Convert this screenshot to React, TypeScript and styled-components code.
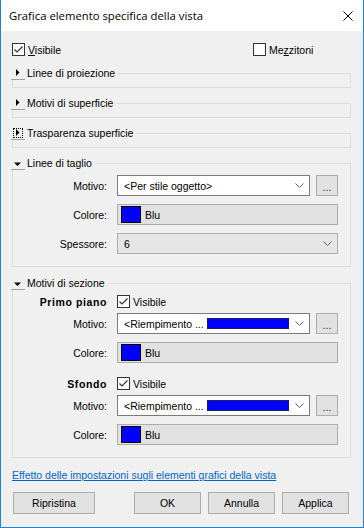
import React from "react";
import styled, { createGlobalStyle } from "styled-components";

const Global = createGlobalStyle`
  html, body { margin: 0; padding: 0; background: #ffffff; }
  body { font-family: "Liberation Sans", Arial, sans-serif; font-size: 10.5px; color: #000; }
  *, *::before, *::after { box-sizing: border-box; }
`;

const Window = styled.div`
  width: 364px;
  height: 528px;
  border: 1px solid #1883d7;
  border-top: none;
  background: #f0f0f0;
  display: flex;
  flex-direction: column;
`;

const TitleBar = styled.div`
  height: 31px;
  flex: none;
  background: #ffffff;
  display: flex;
  align-items: center;
  justify-content: space-between;
  padding: 0 10px 0 8px;
  font-family: "Open Sans", "Noto Sans", sans-serif;
  font-size: 11.3px;
  color: #000;
`;

const CloseIcon = () => (
  <svg width="10" height="10" viewBox="0 0 10 10" style={{ display: "block" }}>
    <path d="M0.5 0.5 L9.5 9.5 M9.5 0.5 L0.5 9.5" stroke="#000" strokeWidth="1" fill="none" />
  </svg>
);

const Body = styled.div`
  flex: 1;
  display: flex;
  flex-direction: column;
  padding: 11px 12px 0 11px;
`;

const TopRow = styled.div`
  display: grid;
  grid-template-columns: 241px 1fr;
  height: 15px;
  align-items: center;
`;

const CheckLabel = styled.label`
  display: inline-flex;
  align-items: center;
  gap: 3px;
  height: 15px;
  white-space: nowrap;
`;

const Box = styled.span`
  width: 13px;
  height: 13px;
  border: 1px solid #333333;
  background: #ffffff;
  display: inline-block;
  flex: none;
`;

const U = styled.span`
  text-decoration: underline;
`;

const CheckBox = ({ checked }: { checked?: boolean }) => (
  <Box>
    {checked && (
      <svg width="11" height="11" viewBox="0 0 11 11" style={{ display: "block" }}>
        <path d="M1.5 5.5 L4 8 L9.5 2.5" stroke="#333" strokeWidth="1.2" fill="none" />
      </svg>
    )}
  </Box>
);

const Group = styled.fieldset<{ $mt: number; $pb: number }>`
  margin: ${(p) => p.$mt}px 0 0 0;
  padding: 0 0 ${(p) => p.$pb}px 0;
  border: 1px solid #dcdcdc;
  min-width: 0;
`;

const Legend = styled.legend`
  display: flex;
  align-items: center;
  height: 14px;
  padding: 0 3px 0 0;
  margin-left: -2px;
  gap: 2px;
  white-space: nowrap;
`;

const Expander = styled.span<{ $focused?: boolean }>`
  width: 14px;
  height: 14px;
  flex: none;
  background: #f0f0f0;
  border-bottom: 1px solid #a0a0a0;
  display: block;
  outline: ${(p) => (p.$focused ? "1px dotted #000" : "none")};
  outline-offset: -3px;
`;

const Arrow = ({ open }: { open?: boolean }) => (
  <svg width="14" height="14" viewBox="0 0 14 14" style={{ display: "block" }}>
    {open ? (
      <polygon points="3,6.5 10,6.5 6.5,10" fill="#000" />
    ) : (
      <polygon points="5,3 8.5,6.5 5,10" fill="#000" />
    )}
  </svg>
);

const Content = styled.div<{ $pt: number }>`
  padding-top: ${(p) => p.$pt}px;
  display: flex;
  flex-direction: column;
  gap: 13px;
`;

const Section = styled.div`
  display: flex;
  flex-direction: column;
  gap: 4px;
`;

const FieldGrid = styled.div`
  display: grid;
  grid-template-columns: 94px 221px;
  column-gap: 10px;
  row-gap: 8px;
  align-items: center;
`;

const SubHeader = styled.div`
  display: grid;
  grid-template-columns: 94px 221px;
  column-gap: 10px;
  align-items: center;
  height: 15px;
`;

const Label = styled.div<{ $bold?: boolean }>`
  text-align: right;
  white-space: nowrap;
  font-weight: ${(p) => (p.$bold ? 700 : 400)};
  letter-spacing: ${(p) => (p.$bold ? "0.6px" : "0")};
`;

const ControlRow = styled.div`
  display: flex;
  gap: 6px;
`;

const Select = styled.div<{ $gray?: boolean }>`
  height: 21px;
  flex: 1;
  min-width: 0;
  border: 1px solid ${(p) => (p.$gray ? "#adadad" : "#7a7a7a")};
  background: ${(p) => (p.$gray ? "#e5e5e5" : "#ffffff")};
  display: flex;
  align-items: center;
  padding: 0 5px 0 6px;
  white-space: nowrap;
`;

const SelectText = styled.span`
  flex: 1;
  display: flex;
  align-items: center;
  overflow: hidden;
`;

const Chevron = () => (
  <svg width="9" height="5" viewBox="0 0 9 5" style={{ display: "block", flex: "none" }}>
    <polyline points="0.5,0.5 4.5,4.5 8.5,0.5" stroke="#606060" strokeWidth="1" fill="none" />
  </svg>
);

const PatternBar = styled.span`
  width: 82px;
  height: 11px;
  margin-left: 3px;
  background: #0000ff;
  border: 1px solid #1c1c60;
  flex: none;
`;

const DotsButton = styled.div`
  width: 22px;
  height: 21px;
  flex: none;
  border: 1px solid #adadad;
  background: #e1e1e1;
  display: flex;
  align-items: center;
  justify-content: center;
  padding-top: 3px;
  color: #1a1a5e;
`;

const ColorField = styled.div`
  height: 21px;
  border: 1px solid #adadad;
  background: #e1e1e1;
  display: flex;
  align-items: center;
  padding: 0 3px;
  gap: 4px;
`;

const Swatch = styled.span<{ $color: string }>`
  width: 20px;
  height: 17px;
  background: ${(p) => p.$color};
  border: 1px solid #000;
  flex: none;
`;

const Link = styled.a`
  margin-top: 10px;
  line-height: 15px;
  color: #0066cc;
  text-decoration: underline;
  white-space: nowrap;
  cursor: pointer;
`;

const ButtonRow = styled.div`
  margin-top: 9px;
  display: flex;
  justify-content: space-between;
  padding: 0 2px 0 1px;
`;

const ButtonGroup = styled.div`
  display: flex;
  gap: 7px;
`;

const Button = styled.button<{ $w: number }>`
  width: ${(p) => p.$w}px;
  height: 22px;
  border: 1px solid #adadad;
  background: #e1e1e1;
  font-family: inherit;
  font-size: 10.5px;
  color: #000;
  padding: 0;
`;

const PatternRow = ({ bar, text, gray }: { bar?: boolean; text: string; gray?: boolean }) => (
  <ControlRow>
    <Select $gray={gray}>
      <SelectText>
        {text}
        {bar && <PatternBar />}
      </SelectText>
      <Chevron />
    </Select>
    <DotsButton>...</DotsButton>
  </ControlRow>
);

const ColorRow = () => (
  <ColorField>
    <Swatch $color="#0000ff" />
    <span>Blu</span>
  </ColorField>
);

const CollapsedGroup = ({ title, mt, focused }: { title: string; mt: number; focused?: boolean }) => (
  <Group $mt={mt} $pb={7}>
    <Legend>
      <Expander $focused={focused}>
        <Arrow />
      </Expander>
      {title}
    </Legend>
  </Group>
);

export default function App() {
  return (
    <>
      <Global />
      <Window>
        <TitleBar>
          <span>Grafica elemento specifica della vista</span>
          <CloseIcon />
        </TitleBar>
        <Body>
          <TopRow>
            <CheckLabel>
              <CheckBox checked />
              <span>
                <U>V</U>isibile
              </span>
            </CheckLabel>
            <CheckLabel>
              <CheckBox />
              <span>
                Me<U>z</U>zitoni
              </span>
            </CheckLabel>
          </TopRow>

          <CollapsedGroup title="Linee di proiezione" mt={9} />
          <CollapsedGroup title="Motivi di superficie" mt={8} />
          <CollapsedGroup title="Trasparenza superficie" mt={8} focused />

          <Group $mt={8} $pb={12}>
            <Legend>
              <Expander>
                <Arrow open />
              </Expander>
              Linee di taglio
            </Legend>
            <Content $pt={5}>
              <FieldGrid>
                <Label>Motivo:</Label>
                <PatternRow text="<Per stile oggetto>" />
                <Label>Colore:</Label>
                <ColorRow />
                <Label>Spessore:</Label>
                <Select $gray>
                  <SelectText>6</SelectText>
                  <Chevron />
                </Select>
              </FieldGrid>
            </Content>
          </Group>

          <Group $mt={9} $pb={12}>
            <Legend>
              <Expander>
                <Arrow open />
              </Expander>
              Motivi di sezione
            </Legend>
            <Content $pt={4}>
              <Section>
                <SubHeader>
                  <Label $bold>Primo piano</Label>
                  <CheckLabel>
                    <CheckBox checked />
                    <span>Visibile</span>
                  </CheckLabel>
                </SubHeader>
                <FieldGrid>
                  <Label>Motivo:</Label>
                  <PatternRow text="<Riempimento ..." bar />
                  <Label>Colore:</Label>
                  <ColorRow />
                </FieldGrid>
              </Section>
              <Section>
                <SubHeader>
                  <Label $bold>Sfondo</Label>
                  <CheckLabel>
                    <CheckBox checked />
                    <span>Visibile</span>
                  </CheckLabel>
                </SubHeader>
                <FieldGrid>
                  <Label>Motivo:</Label>
                  <PatternRow text="<Riempimento ..." bar />
                  <Label>Colore:</Label>
                  <ColorRow />
                </FieldGrid>
              </Section>
            </Content>
          </Group>

          <Link>Effetto delle impostazioni sugli elementi grafici della vista</Link>

          <ButtonRow>
            <Button $w={82}>Ripristina</Button>
            <ButtonGroup>
              <Button $w={67}>OK</Button>
              <Button $w={67}>Annulla</Button>
              <Button $w={67}>Applica</Button>
            </ButtonGroup>
          </ButtonRow>
        </Body>
      </Window>
    </>
  );
}
